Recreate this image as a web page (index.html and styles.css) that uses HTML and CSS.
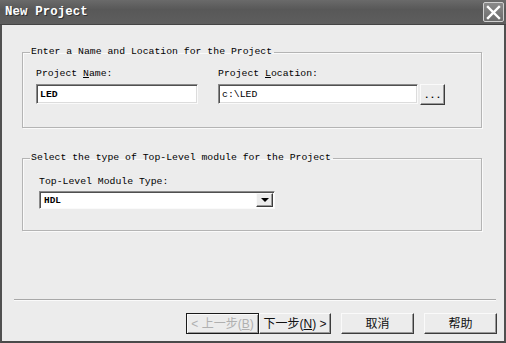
FILE: index.html
```html
<!DOCTYPE html>
<html lang="zh-CN">
<head>
    <meta charset="UTF-8">
    <title>New Project</title>
    <link rel="stylesheet" href="styles.css">
</head>
<body>
    <div class="window">
        <div class="titlebar">
            <span class="title">New Project</span>
            <button class="close-btn" type="button" aria-label="Close">
                <svg width="15" height="15" viewBox="0 0 15 15">
                    <path d="M2 2 L13 13 M13 2 L2 13" stroke="#fff" stroke-width="2.4" stroke-linecap="square"/>
                </svg>
            </button>
        </div>

        <div class="content">
            <fieldset class="group group-name">
                <legend>Enter a Name and Location for the Project</legend>
                <div class="field-row">
                    <div class="field">
                        <label for="projectName">Project <u>N</u>ame:</label>
                        <input type="text" id="projectName" class="text-input name-input" value="LED">
                    </div>
                    <div class="field">
                        <label for="projectLocation">Project <u>L</u>ocation:</label>
                        <div class="location-row">
                            <input type="text" id="projectLocation" class="text-input location-input" value="c:\LED">
                            <button type="button" class="browse-btn">...</button>
                        </div>
                    </div>
                </div>
            </fieldset>

            <fieldset class="group group-type">
                <legend>Select the type of Top-Level module for the Project</legend>
                <div class="field">
                    <label for="moduleType">Top-Level Module Type:</label>
                    <div class="combo">
                        <span class="combo-value" id="moduleType">HDL</span>
                        <span class="combo-arrow"></span>
                    </div>
                </div>
            </fieldset>

            <div class="spacer"></div>

            <div class="separator"></div>

            <div class="actions">
                <div class="wizard-btns">
                    <button type="button" class="btn btn-back" disabled>&lt; 上一步(<u>B</u>)</button>
                    <button type="button" class="btn btn-next">下一步(<u>N</u>) &gt;</button>
                </div>
                <button type="button" class="btn">取消</button>
                <button type="button" class="btn">帮助</button>
            </div>
        </div>
    </div>
</body>
</html>
```

FILE: styles.css
```css
* {
    margin: 0;
    padding: 0;
    box-sizing: border-box;
}

body {
    width: 506px;
    height: 343px;
    overflow: hidden;
    font-family: 'Liberation Mono', 'Noto Sans CJK SC', monospace;
    font-size: 9.8px;
    color: #000;
    background-color: #ececec;
}

.window {
    display: flex;
    flex-direction: column;
    height: 343px;
    background-color: #ececec;
    border-left: 2px solid #505050;
    border-right: 2px solid #505050;
    border-bottom: 2px solid #4a4a4a;
}

.titlebar {
    height: 25px;
    display: flex;
    align-items: center;
    justify-content: space-between;
    padding: 0 0 0 5px;
    margin: 0 -2px;
    background: linear-gradient(to bottom, #6a6a6a, #585858 40%, #5e5e5e);
    border-bottom: 1px solid #444;
}

.title {
    color: #fff;
    font-weight: bold;
    font-size: 12.4px;
    letter-spacing: 0.1px;
    text-shadow: 1px 1px 0 #333;
}

.close-btn {
    width: 21px;
    height: 20px;
    margin-right: 2px;
    display: flex;
    align-items: center;
    justify-content: center;
    background: linear-gradient(to bottom, #8a8a8a, #6c6c6c);
    border: 1px solid #cfcfcf;
    border-radius: 2px;
}

.content {
    flex: 1;
    display: flex;
    flex-direction: column;
    padding: 21px 10px 0 20px;
}

.group {
    width: 460px;
    border: 1px solid #b4b4b4;
    box-shadow: inset 1px 1px 0 #fafafa, 1px 1px 0 #fafafa;
    padding: 0 6px 22px 6px;
}

.group legend {
    padding: 0 2px 0 1px;
    line-height: 12px;
    margin-left: 1px;
}

.group-name .field-row {
    display: flex;
    gap: 20px;
    padding: 10px 0 0 7px;
}

.group-type {
    margin-top: 24px;
    padding-bottom: 21px;
}

.group-type .field {
    padding: 12px 0 0 10px;
}

.field label {
    display: block;
    line-height: 12px;
    margin-bottom: 4px;
}

.text-input {
    height: 20px;
    font-family: inherit;
    font-size: 9.8px;
    color: #000;
    padding: 0 3px;
    background-color: #fff;
    border: 1px solid;
    border-color: #8a8a8a #fafafa #fafafa #8a8a8a;
    box-shadow: inset 1px 1px 0 #505050, inset -1px -1px 0 #dcdcdc;
    outline: none;
}

.name-input {
    width: 162px;
    font-weight: bold;
}

.location-row {
    display: flex;
    gap: 2px;
}

.location-input {
    width: 200px;
}

.browse-btn {
    width: 25px;
    height: 21px;
    font-family: inherit;
    font-size: 9.8px;
    font-weight: bold;
    background-color: #ececec;
    border: 1px solid;
    border-color: #fafafa #3c3c3c #3c3c3c #fafafa;
    box-shadow: inset -1px -1px 0 #9a9a9a;
    padding-top: 2px;
}

.combo {
    width: 236px;
    height: 18px;
    display: flex;
    align-items: center;
    justify-content: space-between;
    background-color: #fff;
    border: 1px solid;
    border-color: #8a8a8a #fafafa #fafafa #8a8a8a;
    box-shadow: inset 1px 1px 0 #505050;
    padding: 1px 1px 1px 4px;
    margin-top: -1px;
}

.combo-value {
    font-weight: bold;
    font-size: 9.4px;
}

.combo-arrow {
    width: 17px;
    height: 14px;
    display: flex;
    align-items: center;
    justify-content: center;
    background-color: #ececec;
    border: 1px solid;
    border-color: #fafafa #3c3c3c #3c3c3c #fafafa;
    box-shadow: inset -1px -1px 0 #9a9a9a;
}

.combo-arrow::after {
    content: "";
    border-left: 4px solid transparent;
    border-right: 4px solid transparent;
    border-top: 4px solid #000;
}

.spacer {
    flex: 1;
}

.separator {
    width: 482px;
    margin-left: -8px;
    border-top: 1px solid #a8a8a8;
    border-bottom: 1px solid #fafafa;
}

.actions {
    display: flex;
    justify-content: flex-end;
    gap: 10px;
    padding: 12px 0 7px 0;
    margin-right: -3px;
}

.wizard-btns {
    display: flex;
}

.btn {
    width: 73px;
    height: 21px;
    white-space: nowrap;
    font-family: 'Liberation Sans', 'Noto Sans CJK SC', sans-serif;
    font-size: 12px;
    color: #111;
    background-color: #ececec;
    border: 1px solid;
    border-color: #fafafa #3c3c3c #3c3c3c #fafafa;
    box-shadow: inset -1px -1px 0 #9a9a9a;
    line-height: 1;
}

.btn u {
    text-decoration: underline;
}

.btn-back {
    color: #b0b0b0;
    border: 1px solid #1a1a1a;
    box-shadow: inset 1px 1px 0 #fafafa, inset -1px -1px 0 #9a9a9a;
}

.btn-next {
    width: 72px;
}
```
